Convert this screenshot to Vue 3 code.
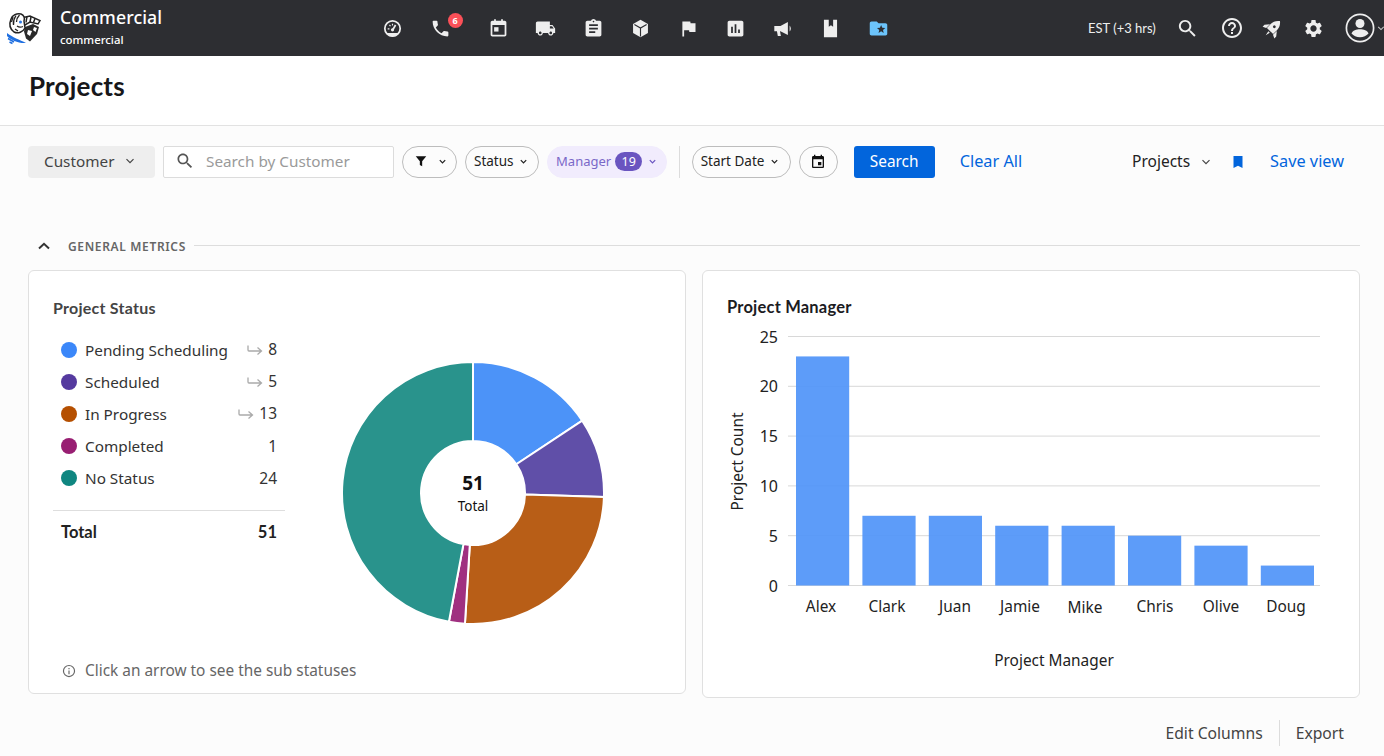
<script setup>
const iconPaths = {
  truck: 'M20 8h-3V4H3c-1.1 0-2 .9-2 2v11h2c0 1.66 1.34 3 3 3s3-1.34 3-3h6c0 1.66 1.34 3 3 3s3-1.34 3-3h2v-5l-3-4zM6 18.5c-.83 0-1.5-.67-1.5-1.5s.67-1.5 1.5-1.5 1.5.67 1.5 1.5-.67 1.5-1.5 1.5zm13.5-9l1.96 2.5H17V9.5h2.5zm-1.5 9c-.83 0-1.5-.67-1.5-1.5s.67-1.5 1.5-1.5 1.5.67 1.5 1.5-.67 1.5-1.5 1.5z',
  clip: 'M19 3h-4.18C14.4 1.84 13.3 1 12 1c-1.3 0-2.4.84-2.82 2H5c-1.1 0-2 .9-2 2v14c0 1.1.9 2 2 2h14c1.1 0 2-.9 2-2V5c0-1.1-.9-2-2-2zm-7 0c.55 0 1 .45 1 1s-.45 1-1 1-1-.45-1-1 .45-1 1-1zm2 14H7v-2h7v2zm3-4H7v-2h10v2zm0-4H7V7h10v2z',
  flag: 'M14.4 6L14 4H5v17h2v-7h5.6l.4 2h7V6z',
  chart: 'M19 3H5c-1.1 0-2 .9-2 2v14c0 1.1.9 2 2 2h14c1.1 0 2-.9 2-2V5c0-1.1-.9-2-2-2zM9 17H7v-7h2v7zm4 0h-2V7h2v10zm4 0h-2v-4h2v4z',
  folder: 'M20 6h-8l-2-2H4c-1.1 0-1.99.9-1.99 2L2 18c0 1.1.9 2 2 2h16c1.1 0 2-.9 2-2V8c0-1.1-.9-2-2-2zm-2.06 11L15 15.28 12.06 17l.78-3.33-2.59-2.24 3.41-.29L15 8l1.34 3.14 3.41.29-2.59 2.24.78 3.33z',
  search: 'M15.5 14h-.79l-.28-.27C15.41 12.59 16 11.11 16 9.5 16 5.91 13.09 3 9.5 3S3 5.91 3 9.5 5.91 16 9.5 16c1.61 0 3.09-.59 4.23-1.57l.27.28v.79l5 4.99L20.49 19l-4.99-5zm-6 0C7.01 14 5 11.99 5 9.5S7.01 5 9.5 5 14 7.01 14 9.5 11.99 14 9.5 14z',
  help: 'M11 18h2v-2h-2v2zm1-16C6.48 2 2 6.48 2 12s4.48 10 10 10 10-4.48 10-10S17.52 2 12 2zm0 18c-4.41 0-8-3.59-8-8s3.59-8 8-8 8 3.59 8 8-3.59 8-8 8zm0-14c-2.21 0-4 1.79-4 4h2c0-1.1.9-2 2-2s2 .9 2 2c0 2-3 1.75-3 5h2c0-2.25 3-2.5 3-5 0-2.21-1.79-4-4-4z',
  gear: 'M19.14 12.94c.04-.3.06-.61.06-.94 0-.32-.02-.64-.07-.94l2.03-1.58c.18-.14.23-.41.12-.61l-1.92-3.32c-.12-.22-.37-.29-.59-.22l-2.39.96c-.5-.38-1.03-.7-1.62-.94l-.36-2.54c-.04-.24-.24-.41-.48-.41h-3.84c-.24 0-.43.17-.47.41l-.36 2.54c-.59.24-1.13.57-1.62.94l-2.39-.96c-.22-.08-.47 0-.59.22L2.74 8.87c-.12.21-.08.47.12.61l2.03 1.58c-.05.3-.09.63-.09.94s.02.64.07.94l-2.03 1.58c-.18.14-.23.41-.12.61l1.92 3.32c.12.22.37.29.59.22l2.39-.96c.5.38 1.03.7 1.62.94l.36 2.54c.05.24.24.41.48.41h3.84c.24 0 .44-.17.47-.41l.36-2.54c.59-.24 1.13-.56 1.62-.94l2.39.96c.22.08.47 0 .59-.22l1.92-3.32c.12-.22.07-.47-.12-.61l-2.01-1.58zM12 15.6c-1.98 0-3.6-1.62-3.6-3.6s1.62-3.6 3.6-3.6 3.6 1.62 3.6 3.6-1.62 3.6-3.6 3.6z'
}
const statuses = [
  { label: 'Pending Scheduling', value: 8, color: '#3b87f9', slice: '#4c93f8', arrow: true },
  { label: 'Scheduled', value: 5, color: '#553a9f', slice: '#604fa8', arrow: true },
  { label: 'In Progress', value: 13, color: '#b54f00', slice: '#b85e17', arrow: true },
  { label: 'Completed', value: 1, color: '#981e72', slice: '#a03080', arrow: false },
  { label: 'No Status', value: 24, color: '#0f8680', slice: '#29938c', arrow: false }
]
const total = 51
const cx = 132, cy = 132, ro = 131, ri = 52
let acc = 0
const pt = (r, a) => `${(cx + r * Math.sin(a)).toFixed(2)} ${(cy - r * Math.cos(a)).toFixed(2)}`
const slices = statuses.map((s) => {
  const a0 = (acc / total) * Math.PI * 2
  acc += s.value
  const a1 = (acc / total) * Math.PI * 2
  const large = a1 - a0 > Math.PI ? 1 : 0
  return {
    color: s.slice,
    d: `M${pt(ri, a0)} L${pt(ro, a0)} A${ro} ${ro} 0 ${large} 1 ${pt(ro, a1)} L${pt(ri, a1)} A${ri} ${ri} 0 ${large} 0 ${pt(ri, a0)} Z`
  }
})
const unit = 9.96
const base = 585.5
const ticks = [0, 5, 10, 15, 20, 25].map((v) => ({ v, y: base - v * unit }))
const managers = [
  { name: 'Alex', v: 23, lx: 821, ly: 612 },
  { name: 'Clark', v: 7, lx: 887, ly: 612 },
  { name: 'Juan', v: 7, lx: 955, ly: 612 },
  { name: 'Jamie', v: 6, lx: 1020, ly: 612 },
  { name: 'Mike', v: 6, lx: 1085, ly: 613 },
  { name: 'Chris', v: 5, lx: 1155, ly: 612 },
  { name: 'Olive', v: 4, lx: 1221, ly: 612 },
  { name: 'Doug', v: 2, lx: 1286, ly: 612 }
].map((m, i) => ({ ...m, x: 796 + i * 66.4, y: base - m.v * unit, h: m.v * unit }))
</script>

<template>
  <div class="page">
    <header class="topbar">
      <div class="logo">
        <svg width="40" height="40" viewBox="6 8 40 40" fill="none">
          <path d="M7 33C12 37 20 40 26 43 18 43.500 11 40 7 36Z" fill="#1f6fe0"/>
          <path d="M8 38.500l6 3.500M9.500 42l3 1.500" stroke="#1f6fe0" stroke-width="1.500"/>
          <path d="M25 27l8-3 6 3-2 7-7 7.500-4-3-2-7z" fill="#2a2a2a"/>
          <path d="M28 30l4 1-2 5-3-2zM34 27l3 1-1.500 4-2.500-2z" fill="#fff"/>
          <path d="M21 18l9-2 10 4.500-2 3.500-8-2-5 3z" fill="#fff" stroke="#222" stroke-width="1.500"/>
          <path d="M27 16.500l-1 6M31 17l-1 5M35 18.500l-1.500 4" stroke="#222" stroke-width="1.500"/>
          <path d="M11 19C12 15 17 13 21 14 24 15 25 18 24 21L25 28C23 32 18 34 14 32 10 29 9 24 11 19Z" fill="#fff" stroke="#222" stroke-width="1.500"/>
          <path d="M13 17l-1.500 5M16 15.500c-2 3-3 6-2.500 9.500M19.500 15c-2 2-3 4-3 7M17 26c2 1.500 4 1.500 6 .5M15 29l3 2" stroke="#222" stroke-width="1.300"/>
          <circle cx="20.500" cy="22" r="1.500" fill="#2b78e4"/>
        </svg>
      </div>
      <div class="brand">
        <div class="brand-name">Commercial</div>
        <div class="brand-sub">commercial</div>
      </div>
      <nav class="nav">
        <span class="nav-item">
          <svg class="ic" viewBox="0 0 24 24"><circle cx="12" cy="12" r="8.800" fill="none" stroke="#eee" stroke-width="2"/><path d="M5 17h14c-1.400 2.600-4 4-7 4s-5.600-1.400-7-4z" fill="#eee"/><path d="M12 14l3.500-6" stroke="#eee" stroke-width="2"/><circle cx="12" cy="13.500" r="1.800" fill="#eee"/><path d="M6.500 12.500h2M8.500 8l1.200 1.200M12 6.500v2" stroke="#eee" stroke-width="1.300"/></svg>
        </span>
        <span class="nav-item phone">
          <svg class="ic" viewBox="0 0 24 24"><path fill="#eee" d="M6.62 10.79c1.44 2.83 3.76 5.14 6.59 6.59l2.200-2.200c.27-.27.67-.36 1.020-.24 1.120.37 2.330.57 3.570.57.550 0 1 .45 1 1V20c0 .55-.45 1-1 1-9.390 0-17-7.610-17-17 0-.55.45-1 1-1h3.500c.55 0 1 .45 1 1 0 1.250.2 2.450.57 3.570.11.35.03.74-.25 1.020l-2.200 2.200z"/></svg>
          <span class="badge">6</span>
        </span>
        <span class="nav-item">
          <svg class="ic" viewBox="0 0 24 24"><path fill="#eee" fill-rule="evenodd" d="M7 1.500h2V3h6V1.500h2V3h2c1.100 0 2 .9 2 2v14c0 1.100-.9 2-2 2H5c-1.100 0-2-.9-2-2V5c0-1.100.9-2 2-2h2zM5 8v11h14V8z"/><rect x="7" y="10.500" width="5" height="5" fill="#eee"/></svg>
        </span>
        <span class="nav-item"><svg class="ic" viewBox="0 0 24 24"><path fill="#eee" :d="iconPaths.truck"/></svg></span>
        <span class="nav-item"><svg class="ic" viewBox="0 0 24 24"><path fill="#eee" :d="iconPaths.clip"/></svg></span>
        <span class="nav-item">
          <svg class="ic" viewBox="0 0 24 24"><path fill="#eee" d="M12 2l8.500 4.800v10.400L12 22l-8.500-4.800V6.800z"/><path d="M5 7.500L12 11.500l7-4M12 11.500V21" fill="none" stroke="#2d2e32" stroke-width="1.300"/><path d="M12 4.500l4.500 2.500-4.500 2.500L7.500 7z" fill="#eee"/></svg>
        </span>
        <span class="nav-item"><svg class="ic" viewBox="0 0 24 24"><path fill="#eee" :d="iconPaths.flag"/></svg></span>
        <span class="nav-item"><svg class="ic" viewBox="0 0 24 24"><path fill="#eee" :d="iconPaths.chart"/></svg></span>
        <span class="nav-item">
          <svg class="ic" viewBox="0 0 24 24"><path fill="#eee" d="M1.500 9h7L17 4.500v15L8.500 15H8l1 5.500H5.500L4.500 15h-3z"/><path d="M19 8.500c1.800 1.800 1.800 5.200 0 7z" fill="#eee"/></svg>
        </span>
        <span class="nav-item">
          <svg class="ic" viewBox="0 0 24 24"><path fill="#eee" d="M4.500 2H10v8l2.500-1.800L15 10V2h4.500v20h-15z"/></svg>
        </span>
        <span class="nav-item"><svg class="ic" viewBox="0 0 24 24"><path fill="#6cc4fb" :d="iconPaths.folder"/></svg></span>
      </nav>
      <div class="top-right">
        <span class="tz">EST (+3 hrs)</span>
        <svg class="tr-search" viewBox="0 0 24 24"><path fill="#eee" :d="iconPaths.search"/></svg>
        <svg class="tr-help" viewBox="0 0 24 24"><path fill="#eee" :d="iconPaths.help"/></svg>
        <svg class="tr-rocket" viewBox="0 0 24 24">
          <g transform="rotate(45 12 12)">
            <path fill="#eee" d="M12 0c3.800 2.800 5 6.500 5 9.500V16H7V9.500C7 6.500 8.200 2.800 12 0z"/>
            <path fill="#eee" d="M6.500 10.500L2.500 15.500v3l4-1.800zM17.500 10.500l4 5v3l-4-1.800zM10.800 17.500h2.400L12 23z"/>
            <circle cx="12" cy="9" r="1.600" fill="#2d2e32"/>
          </g>
        </svg>
        <svg class="tr-gear" viewBox="0 0 24 24"><path fill="#eee" :d="iconPaths.gear"/></svg>
        <svg class="tr-avatar" viewBox="0 0 30 30"><circle cx="15" cy="15" r="13.600" fill="none" stroke="#eee" stroke-width="1.700"/><circle cx="15" cy="10.500" r="4.500" fill="#eee"/><path d="M6.500 20.500c1-3 5-4.300 8.500-4.300s7.500 1.300 8.500 4.300c-2 2.400-5 3.700-8.500 3.700s-6.500-1.300-8.500-3.700z" fill="#eee"/></svg>
        <svg class="tr-caret" viewBox="0 0 10 10"><path d="M1.500 3.500L5 7l3.500-3.500" fill="none" stroke="#ccc" stroke-width="1.300"/></svg>
      </div>
    </header>

    <div class="title-bar"><h1>Projects</h1></div>

    <section class="toolbar">
      <button class="select">Customer
        <svg class="chev" viewBox="0 0 10 10"><path d="M1.500 3.200L5 6.700l3.500-3.500" fill="none" stroke="#444" stroke-width="1.200"/></svg>
      </button>
      <div class="search-box">
        <svg class="s-ic" viewBox="0 0 24 24"><path fill="#555" :d="iconPaths.search"/></svg>
        <span>Search by Customer</span>
      </div>
      <button class="pill pill-filter">
        <svg class="funnel" viewBox="0 0 24 24"><path d="M3 4h18l-7 8.500V21l-4-2v-6.500z" fill="#111"/></svg>
        <svg class="chev-s" viewBox="0 0 10 10"><path d="M2 3.500L5 6.500l3-3" fill="none" stroke="#222" stroke-width="1.400"/></svg>
      </button>
      <button class="pill">Status
        <svg class="chev-s" viewBox="0 0 10 10"><path d="M2 3.500L5 6.500l3-3" fill="none" stroke="#222" stroke-width="1.400"/></svg>
      </button>
      <button class="pill pill-active">Manager <span class="count">19</span>
        <svg class="chev-s" viewBox="0 0 10 10"><path d="M2 3.500L5 6.500l3-3" fill="none" stroke="#6a55c0" stroke-width="1.400"/></svg>
      </button>
      <span class="vr"></span>
      <button class="pill pill-date">Start Date
        <svg class="chev-s" viewBox="0 0 10 10"><path d="M2 3.500L5 6.500l3-3" fill="none" stroke="#222" stroke-width="1.400"/></svg>
      </button>
      <button class="pill pill-cal">
        <svg class="cal" viewBox="0 0 24 24"><path fill="#111" d="M17 12h-5v5h5v-5zM16 1v2H8V1H6v2H5c-1.110 0-1.990.9-1.990 2L3 19c0 1.100.89 2 2 2h14c1.100 0 2-.9 2-2V5c0-1.100-.9-2-2-2h-1V1h-2zm3 18H5V8h14v11z"/></svg>
      </button>
      <button class="primary">Search</button>
      <a class="link clear">Clear All</a>
      <div class="tool-right">
        <span class="view">Projects</span>
        <svg class="chev view-chev" viewBox="0 0 10 10"><path d="M1.500 3.200L5 6.700l3.500-3.500" fill="none" stroke="#444" stroke-width="1.200"/></svg>
        <svg class="bm" viewBox="0 0 12 14"><path d="M1.500 1h9v12L6 10.700 1.500 13z" fill="#0265dc"/></svg>
        <a class="link save">Save view</a>
      </div>
    </section>

    <div class="section-head">
      <svg class="collapse" viewBox="0 0 14 10"><path d="M2 7.500L7 2.800l5 4.700" fill="none" stroke="#333" stroke-width="2"/></svg>
      <span class="section-label">GENERAL METRICS</span>
      <span class="section-line"></span>
    </div>

    <div class="cards">
      <article class="card card-left">
        <h2 class="status-title">Project Status</h2>
        <div class="status-body">
          <div class="legend">
            <div v-for="s in statuses" :key="s.label" class="legend-row">
              <span class="dot" :style="{ background: s.color }"></span>
              <span class="legend-label">{{ s.label }}</span>
              <svg v-if="s.arrow" class="hook" viewBox="0 0 16 12"><path d="M1 1.500V6a1 1 0 0 0 1 1h12M10.500 3.500L14.500 7l-4 3.500" fill="none" stroke="#aaa" stroke-width="1.300"/></svg>
              <span class="legend-value">{{ s.value }}</span>
            </div>
            <div class="legend-total"><span>Total</span><span>{{ total }}</span></div>
          </div>
          <div class="donut">
            <svg width="264" height="264" viewBox="0 0 264 264">
              <path v-for="(p, i) in slices" :key="i" :d="p.d" :fill="p.color" stroke="#fff" stroke-width="2"/>
            </svg>
            <div class="donut-center"><b>51</b><span>Total</span></div>
          </div>
        </div>
        <div class="note">
          <svg class="info" viewBox="0 0 24 24"><circle cx="12" cy="12" r="9.500" fill="none" stroke="#666" stroke-width="2"/><path d="M11 11h2v6.500h-2zM11 6.800h2v2.200h-2z" fill="#666"/></svg>
          Click an arrow to see the sub statuses
        </div>
      </article>

      <article class="card card-right">
        <h2 class="manager-title">Project Manager</h2>
        <svg class="bar-chart" width="656" height="376" viewBox="703 321 656 376">
          <g v-for="t in ticks" :key="t.v">
            <line x1="788" :x2="1320" :y1="t.y" :y2="t.y" stroke="#d8d8d8" stroke-width="1"/>
            <text x="778" :y="t.y + 6" text-anchor="end" class="tick">{{ t.v }}</text>
          </g>
          <rect v-for="m in managers" :key="m.name" :x="m.x" :y="m.y" width="53.200" :height="m.h" fill="#4f94f8" fill-opacity="0.92"/>
          <text v-for="m in managers" :key="m.name + 't'" :x="m.lx" :y="m.ly" text-anchor="middle" class="tick small">{{ m.name }}</text>
          <text x="1054" y="666" text-anchor="middle" class="tick small">Project Manager</text>
          <text transform="translate(742.500 461.500) rotate(-90)" text-anchor="middle" class="tick small">Project Count</text>
        </svg>
      </article>
    </div>

    <footer class="foot">
      <span>Edit Columns</span>
      <span class="foot-sep"></span>
      <span>Export</span>
    </footer>
  </div>
</template>

<style>
html, body { margin: 0; background: #fcfcfc; overflow: hidden; }
</style>

<style scoped>
.page { width: 1384px; height: 756px; background: #fcfcfc; font-family: "Noto Sans", "Open Sans", sans-serif; color: #222; overflow: hidden; }
button { font-family: inherit; margin: 0; cursor: pointer; }
.topbar { height: 56px; background: #2d2e32; display: flex; align-items: center; position: relative; }
.logo { width: 52px; height: 56px; background: #fff; display: flex; align-items: center; justify-content: center; flex: none; }
.brand { width: 300px; padding-left: 8px; box-sizing: border-box; color: #fff; margin-right: 17px; flex: none; margin-top: -2px; }
.brand-name { font-size: 17.700px; font-weight: 500; line-height: 22px; letter-spacing: .1px; margin-top: -1px; }
.brand-sub { font-size: 11.400px; line-height: 16px; font-weight: 500; margin-top: 4px; }
.nav { display: flex; flex: none; }
.nav-item { width: 47.500px; height: 56px; display: flex; align-items: center; justify-content: center; position: relative; }
.phone { margin-right: 10.500px; }
.ic { width: 21px; height: 21px; }
.badge { position: absolute; left: 31px; top: 13px; width: 15px; height: 15px; border-radius: 50%; background: #fb5058; color: #fff; font: 700 9px/15px "Noto Sans", sans-serif; text-align: center; }
.top-right { position: absolute; left: 1088px; top: 0; height: 56px; display: flex; align-items: center; color: #eee; }
.tz { font: 400 13px/16px Lato, sans-serif; width: 69px; white-space: nowrap; }
.tr-search { width: 23px; height: 23px; margin-left: 19px; }
.tr-help { width: 24px; height: 24px; margin-left: 21px; }
.tr-rocket { width: 21px; height: 21px; margin-left: 18px; }
.tr-gear { width: 21px; height: 21px; margin-left: 20px; }
.tr-avatar { width: 30px; height: 30px; margin-left: 21px; }
.tr-caret { width: 8px; height: 8px; margin-left: 2px; }

.title-bar { height: 69px; background: #fff; border-bottom: 1px solid #e2e2e2; display: flex; align-items: center; padding-left: 29px; }
h1 { margin: 0 0 10px; font: 700 26px/32px Lato, sans-serif; color: #17171a; letter-spacing: .2px; }

.toolbar { display: flex; align-items: center; padding: 20px 40px 0 28px; height: 32px; }
.select { width: 127px; height: 32px; border: 0; border-radius: 4px; background: #eeeeee; color: #444; font-size: 15.300px; display: flex; align-items: center; padding: 0 0 3px 16px; }
.chev { width: 10px; height: 10px; margin-left: 11px; }
.search-box { width: 231px; height: 32px; box-sizing: border-box; border: 1px solid #dcdcdc; border-radius: 2px; background: #fff; margin-left: 8px; display: flex; align-items: center; padding: 0 0 3px 10.500px; color: #9a9a9a; font-size: 15.300px; }
.s-ic { width: 20px; height: 20px; margin-right: 11.500px; }
.pill { height: 32px; box-sizing: border-box; border: 1px solid #bdbdbd; border-radius: 16px; background: transparent; padding: 0 10px 2px 8px; font-size: 13.500px; color: #222; display: flex; align-items: center; margin-left: 8px; white-space: nowrap; }
.pill-filter { width: 55px; padding: 0 9.500px 2px 11px; justify-content: space-between; }
.pill-active { background: #f1ecfd; border-color: #f1ecfd; color: #7a68c8; font-size: 13px; padding: 0 9px 2px 8px; }
.pill-date { width: 99px; padding-right: 10px; }
.count { background: #6a55c0; color: #fff; border-radius: 10px; width: 27px; height: 19px; line-height: 19px; font-size: 12.500px; text-align: center; margin: 0 0 0 4px; }
.funnel { width: 14px; height: 14px; }
.chev-s { width: 9px; height: 9px; margin-left: 5.500px; flex: none; }
.pill-filter .chev-s { margin-left: 0; }
.cal { width: 16px; height: 16px; }
.pill-cal { width: 39px; padding: 0 0 1px; justify-content: center; }
.vr { width: 1px; height: 32px; background: #dcdcdc; margin: 0 4px 0 12px; }
.primary { width: 81px; height: 32px; border: 0; border-radius: 3px; background: #0265dc; color: #fff; font-size: 15.400px; margin-left: 16px; padding: 0 0 2px; }
.link { color: #0265dc; font-size: 16.300px; white-space: nowrap; margin-top: -3px; }
.clear { margin-left: 25px; }
.tool-right { margin-left: auto; display: flex; align-items: center; }
.view { font-size: 15.500px; color: #222; margin-top: -3px; }
.view-chev { margin-left: 11px; }
.bm { width: 12px; height: 14px; margin-left: 21px; }
.save { margin-left: 26px; }

.section-head { display: flex; align-items: center; height: 16px; margin-top: 60px; padding: 0 24px 0 37px; }
.collapse { width: 14px; height: 10px; }
.section-label { font-size: 12px; font-weight: 600; letter-spacing: .65px; color: #666; margin-left: 17px; white-space: nowrap; }
.section-line { flex: 1; height: 1px; background: #dddddd; margin-left: 8px; margin-top: -2px; }

.cards { display: flex; align-items: flex-start; gap: 16px; padding: 16px 24px 0 28px; }
.card { width: 658px; box-sizing: border-box; background: #fff; border: 1px solid #e0e0e0; border-radius: 6px; }
.card-left { height: 424px; padding: 0 24px; display: flex; flex-direction: column; }
.card-right { height: 428px; overflow: hidden; }
.status-title { margin: 28px 0 0; font: 700 16px/18px Lato, sans-serif; color: #444; letter-spacing: .25px; }
.status-body { display: flex; margin-top: 17px; }
.legend { width: 232px; flex: none; }
.legend-row { height: 32px; display: flex; align-items: center; padding: 0 8px; font-size: 15.300px; color: #333; }
.dot { width: 16px; height: 16px; border-radius: 50%; margin-right: 8px; flex: none; }
.legend-label { white-space: nowrap; }
.hook { width: 16px; height: 12px; margin-left: auto; margin-right: 5px; }
.legend-value { margin-left: auto; color: #333; font-size: 15.500px; }
.hook + .legend-value { margin-left: 0; margin-top: -2px; }
.legend-total { margin-top: 16px; border-top: 1px solid #dedede; height: 40px; box-sizing: content-box; display: flex; align-items: center; justify-content: space-between; padding: 1px 8px 0; font: 700 16.500px/20px Lato, sans-serif; color: #222; }
.donut { position: relative; width: 264px; height: 264px; margin: 27px 0 0 56px; flex: none; }
.donut svg { display: block; }
.donut-center { position: absolute; left: 0; right: 0; top: 110px; display: flex; flex-direction: column; align-items: center; color: #111; }
.donut-center b { font-size: 19px; line-height: 24px; font-weight: 700; }
.donut-center span { font-size: 13.500px; line-height: 20px; margin-top: 1px; }
.note { margin-top: auto; margin-bottom: 12px; padding-left: 9px; font-size: 15.400px; color: #666; display: flex; align-items: center; line-height: 20px; white-space: nowrap; }
.info { width: 14px; height: 14px; margin-right: 9px; }
.manager-title { margin: 0; padding: 26px 24px 0; height: 24px; font: 700 16.500px/20px Lato, sans-serif; color: #1c1c1f; letter-spacing: .2px; }
.bar-chart { display: block; }
.tick { font-size: 16px; fill: #222; font-family: "Noto Sans", sans-serif; }
.small { font-size: 15.400px; }
.foot { display: flex; align-items: center; justify-content: flex-end; padding: 22px 40px 0 0; font-size: 15.700px; color: #444; height: 26px; }
.foot-sep { width: 1px; height: 26px; background: #dcdcdc; margin: 0 16px 0 16px; }
</style>
